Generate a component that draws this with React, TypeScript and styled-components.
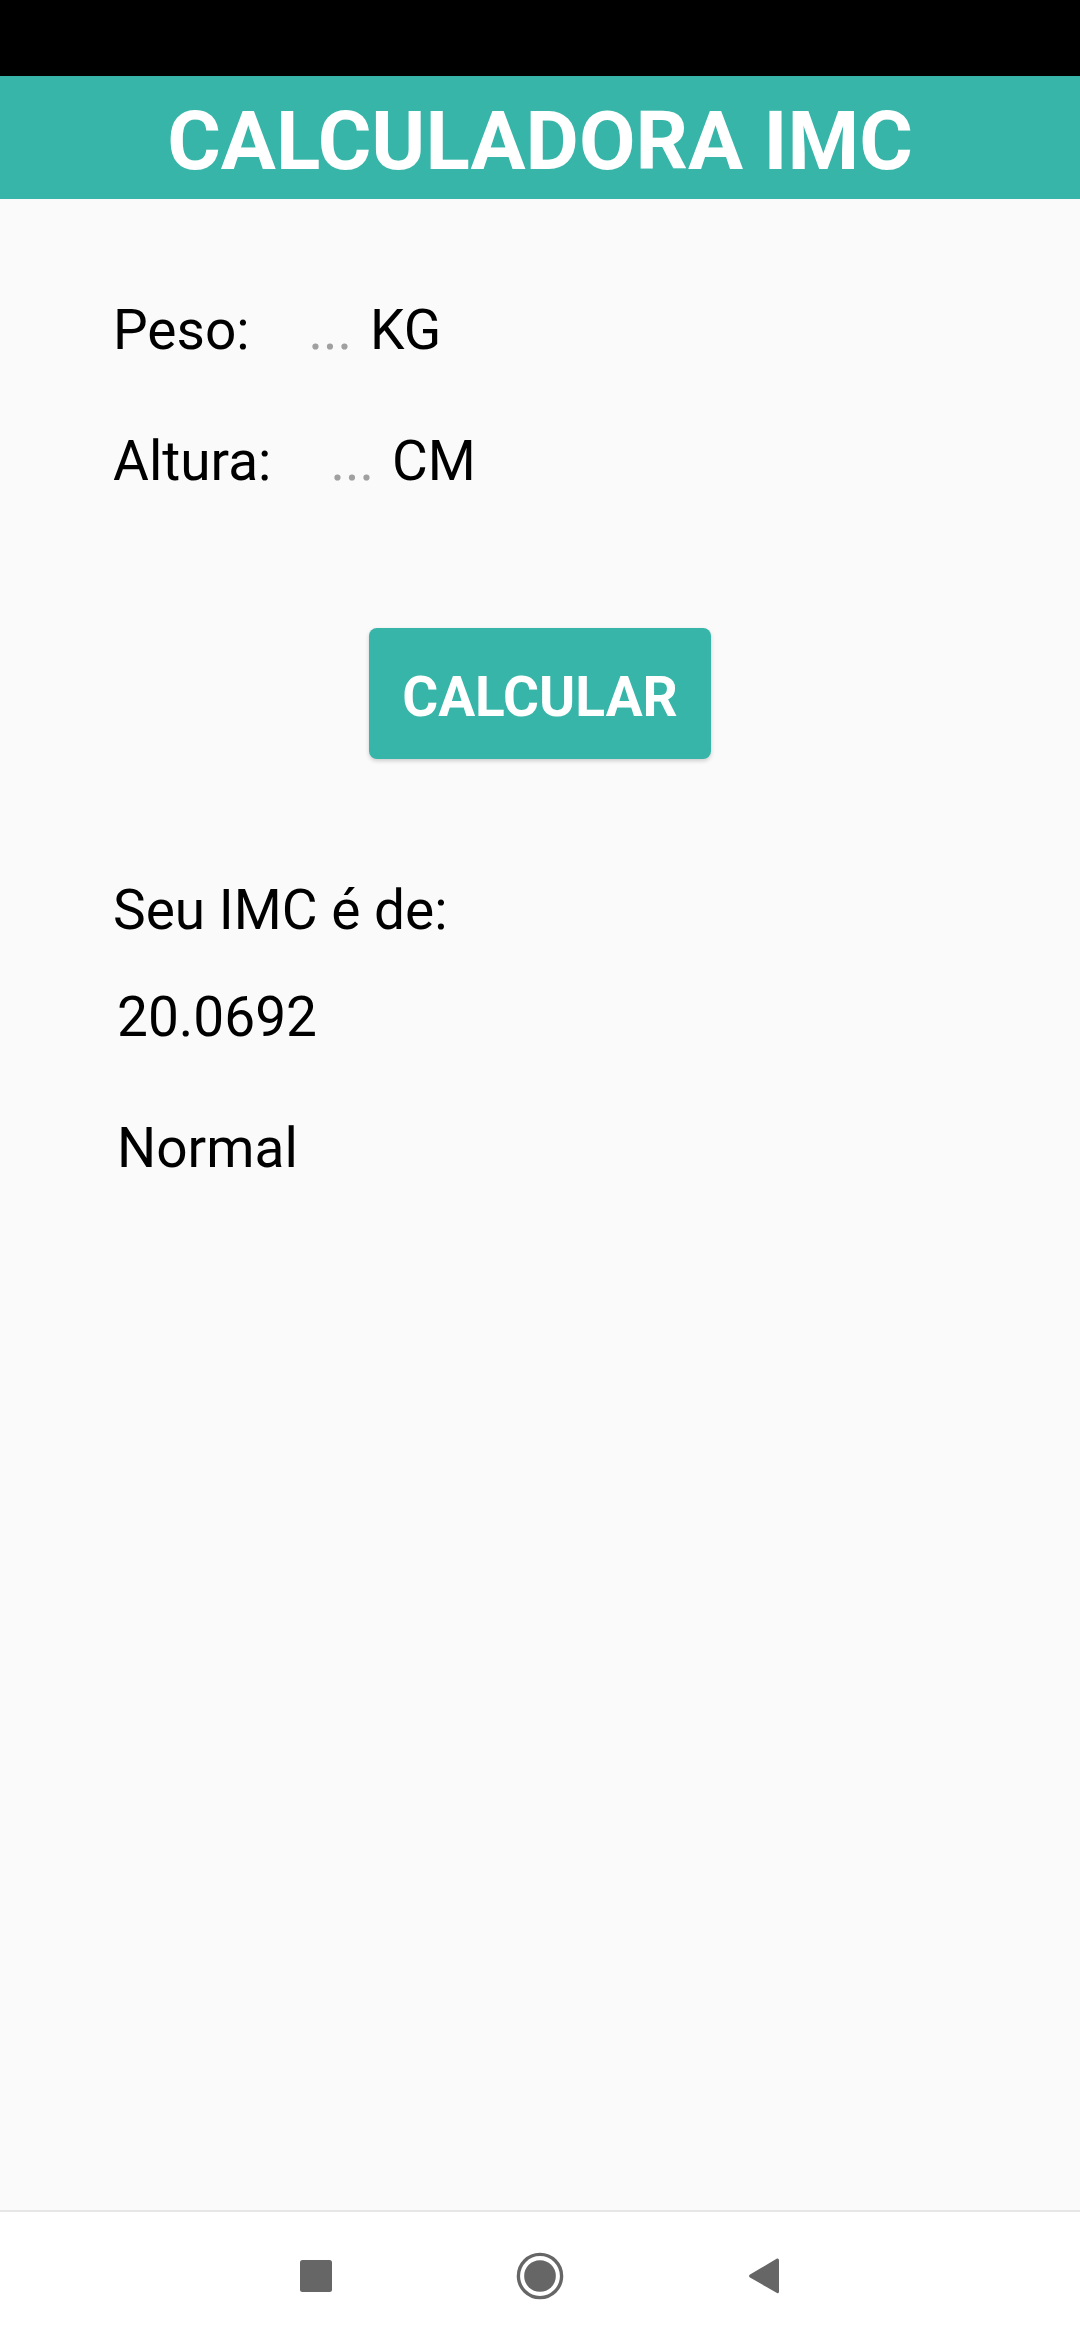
import React from "react";
import styled, { createGlobalStyle } from "styled-components";

const GlobalStyle = createGlobalStyle`
  html, body {
    margin: 0;
    padding: 0;
    background: #fafafa;
  }
  * { box-sizing: border-box; }
`;

const TEAL = "#36b5a8";

const Screen = styled.div`
  display: flex;
  flex-direction: column;
  width: 1080px;
  height: 2340px;
  background: #fafafa;
  font-family: Roboto, "Noto Sans", sans-serif;
  color: #000;
`;

const StatusBar = styled.div`
  height: 76px;
  background: #000;
  flex-shrink: 0;
`;

const Header = styled.header`
  height: 123px;
  flex-shrink: 0;
  background: ${TEAL};
  display: flex;
  justify-content: center;
  padding-top: 8px;
`;

const Title = styled.h1`
  margin: 0;
  font-size: 82px;
  line-height: 115px;
  font-weight: 700;
  color: #fff;
`;

const Main = styled.main`
  flex: 1;
  display: flex;
  flex-direction: column;
  padding: 99px 0 0 113px;
`;

const Row = styled.div<{ $gap: number }>`
  display: flex;
  align-items: baseline;
  margin-top: ${(p) => p.$gap}px;
  font-size: 55px;
  line-height: 64px;
`;

const Label = styled.span``;

const Placeholder = styled.span`
  margin-left: 59px;
  color: #a0a0a0;
`;

const Unit = styled.span`
  margin-left: 18px;
`;

const ButtonWrap = styled.div`
  display: flex;
  justify-content: center;
  margin: 135px 0 0 -113px;
`;

const Button = styled.button`
  width: 342px;
  height: 131px;
  border: none;
  border-radius: 8px;
  background: ${TEAL};
  color: #fff;
  font-family: Roboto, "Noto Sans", sans-serif;
  font-weight: 700;
  font-size: 55px;
  line-height: 64px;
  padding: 6px 0 0;
  box-shadow: 0 2px 4px rgba(0, 0, 0, 0.18);
  cursor: pointer;
`;

const Text = styled.p<{ $gap: number; $indent?: number }>`
  margin: ${(p) => p.$gap}px 0 0 ${(p) => p.$indent ?? 0}px;
  font-size: 55px;
  line-height: 64px;
`;

const NavBar = styled.nav`
  height: 130px;
  flex-shrink: 0;
  background: #fff;
  border-top: 2px solid #e6e6e6;
  display: flex;
  justify-content: center;
  align-items: center;
  gap: 176px;
`;

const NavButton = styled.div`
  width: 48px;
  height: 48px;
  display: flex;
  align-items: center;
  justify-content: center;
`;

export default function App() {
  return (
    <>
      <GlobalStyle />
      <Screen>
        <StatusBar />
        <Header>
          <Title>CALCULADORA IMC</Title>
        </Header>
        <Main>
          <Row $gap={0}>
            <Label>Peso:</Label>
            <Placeholder>...</Placeholder>
            <Unit>KG</Unit>
          </Row>
          <Row $gap={67}>
            <Label>Altura:</Label>
            <Placeholder>...</Placeholder>
            <Unit>CM</Unit>
          </Row>
          <ButtonWrap>
            <Button>CALCULAR</Button>
          </ButtonWrap>
          <Text $gap={119}>Seu IMC é de:</Text>
          <Text $gap={43} $indent={4}>20.0692</Text>
          <Text $gap={67} $indent={4}>Normal</Text>
        </Main>
        <NavBar>
          <NavButton>
            <svg width="32" height="32" viewBox="0 0 32 32">
              <rect x="0" y="0" width="32" height="32" rx="2.5" fill="#666" />
            </svg>
          </NavButton>
          <NavButton>
            <svg width="50" height="50" viewBox="0 0 50 50">
              <circle cx="25" cy="25" r="22.5" fill="none" stroke="#666" strokeWidth="3.5" />
              <circle cx="25" cy="25" r="16.5" fill="#666" />
            </svg>
          </NavButton>
          <NavButton>
            <svg width="32" height="36" viewBox="0 0 32 36">
              <path d="M29 0.5 Q31 0 31 2.5 L31 33.5 Q31 36 29 35 L2 19.5 Q0 18 2 16.5 Z" fill="#666" />
            </svg>
          </NavButton>
        </NavBar>
      </Screen>
    </>
  );
}
